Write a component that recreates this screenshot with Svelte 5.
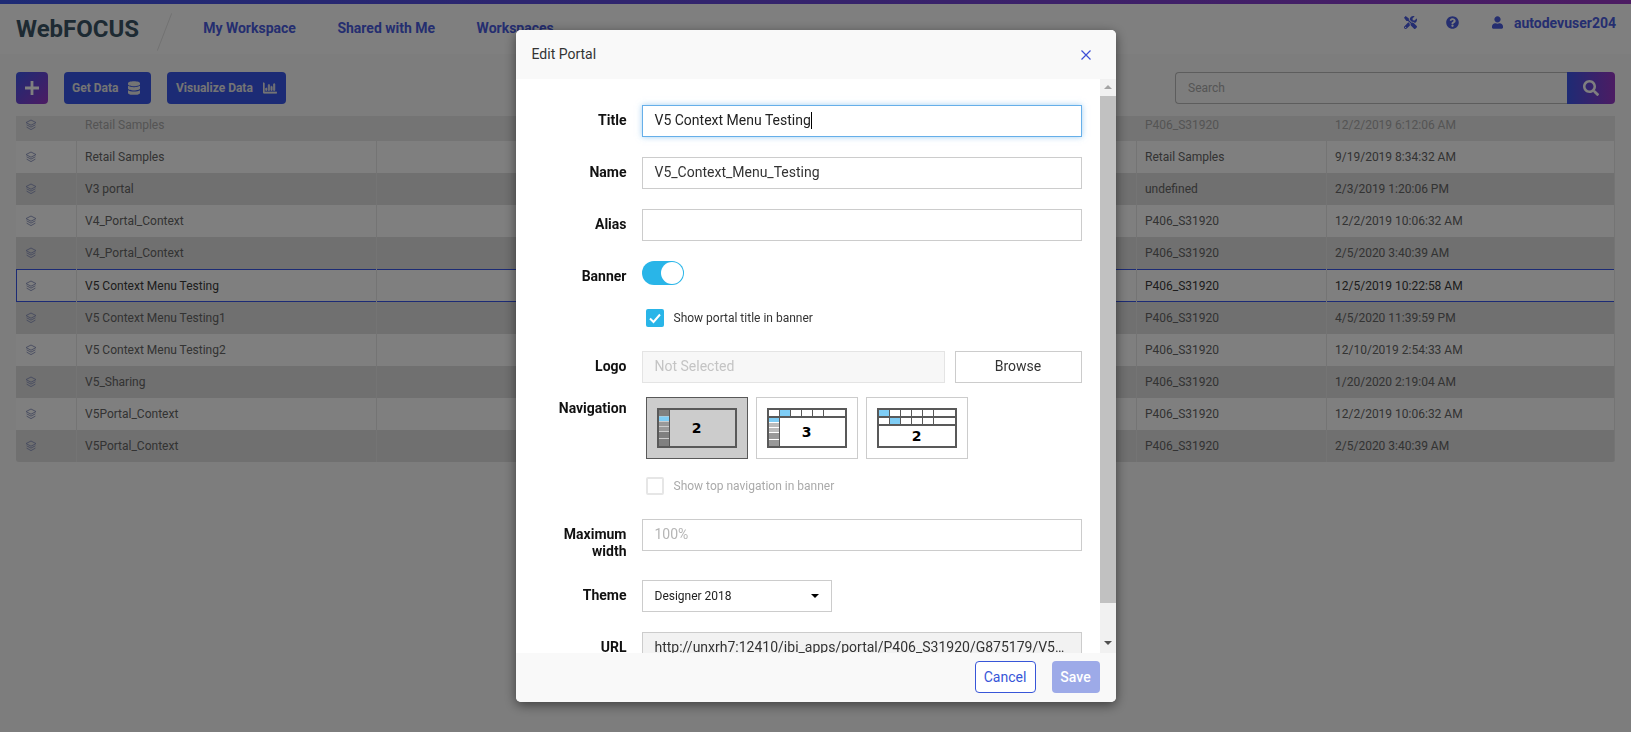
<script>
  const rows = [
    ['Retail Samples', 'P406_S31920', '12/2/2019 6:12:06 AM'],
    ['Retail Samples', 'Retail Samples', '9/19/2019 8:34:32 AM'],
    ['V3 portal', 'undefined', '2/3/2019 1:20:06 PM'],
    ['V4_Portal_Context', 'P406_S31920', '12/2/2019 10:06:32 AM'],
    ['V4_Portal_Context', 'P406_S31920', '2/5/2020 3:40:39 AM'],
    ['V5 Context Menu Testing', 'P406_S31920', '12/5/2019 10:22:58 AM'],
    ['V5 Context Menu Testing1', 'P406_S31920', '4/5/2020 11:39:59 PM'],
    ['V5 Context Menu Testing2', 'P406_S31920', '12/10/2019 2:54:33 AM'],
    ['V5_Sharing', 'P406_S31920', '1/20/2020 2:19:04 AM'],
    ['V5Portal_Context', 'P406_S31920', '12/2/2019 10:06:32 AM'],
    ['V5Portal_Context', 'P406_S31920', '2/5/2020 3:40:39 AM']
  ];
  const selected = 5;
</script>

<div class="page">
  <div class="topline"></div>
  <header class="header">
    <div class="logo">WebFOCUS</div>
    <div class="slash"></div>
    <nav class="nav">
      <span>My Workspace</span>
      <span>Shared with Me</span>
      <span>Workspaces</span>
    </nav>
    <div class="tools">
      <svg class="ico-tools" viewBox="0 0 512 512"><path d="M501.1 395.7L384 278.6c-23.1-23.1-57.6-27.6-85.4-13.9L192 158.1V96L64 0 0 64l96 128h62.1l106.6 106.6c-13.6 27.8-9.2 62.3 13.9 85.4l117.1 117.1c14.6 14.6 38.2 14.6 52.7 0l52.7-52.7c14.5-14.6 14.5-38.2 0-52.7zM331.7 225c28.3 0 54.9 11 74.9 31l19.4 19.4c15.8-6.9 30.8-16.5 43.8-29.5 37.1-37.1 49.7-89.3 37.9-136.7-2.2-9-13.5-12.1-20.1-5.5l-74.4 74.4-67.9-11.3L334 98.9l74.4-74.4c6.6-6.6 3.4-17.9-5.7-20.2-47.4-11.7-99.6.9-136.6 37.9-28.5 28.5-41.9 66.1-41.2 103.6l82.1 82.1c8.1-1.9 16.5-2.9 24.7-2.9zm-103.9 82l-56.7-56.7L18.7 402.8c-25 25-25 65.5 0 90.5s65.5 25 90.5 0l123.6-123.6c-7.6-19.9-9.9-41.6-5-62.7zM64 472c-13.2 0-24-10.8-24-24 0-13.3 10.7-24 24-24s24 10.7 24 24c0 13.2-10.7 24-24 24z"/></svg>
      <svg class="ico-help" viewBox="0 0 512 512"><path d="M504 256c0 136.997-111.043 248-248 248S8 392.997 8 256C8 119.083 119.043 8 256 8s248 111.083 248 248zM262.655 90c-54.497 0-89.255 22.957-116.549 63.758-3.536 5.286-2.353 12.415 2.715 16.258l34.699 26.31c5.205 3.947 12.621 3.008 16.665-2.122 17.864-22.658 30.113-35.797 57.303-35.797 20.429 0 45.698 13.148 45.698 32.958 0 14.976-12.363 22.667-32.534 33.976C247.128 238.528 216 254.941 216 296v4c0 6.627 5.373 12 12 12h56c6.627 0 12-5.373 12-12v-1.333c0-28.462 83.186-29.647 83.186-106.667 0-58.002-60.165-102-116.531-102zM256 338c-25.365 0-46 20.635-46 46 0 25.364 20.635 46 46 46s46-20.636 46-46c0-25.365-20.635-46-46-46z"/></svg>
      <svg class="ico-user" viewBox="0 0 448 512"><path d="M224 256c70.7 0 128-57.3 128-128S294.7 0 224 0 96 57.3 96 128s57.3 128 128 128zm89.6 32h-16.7c-22.2 10.2-46.9 16-72.9 16s-50.6-5.8-72.9-16h-16.7C60.2 288 0 348.2 0 422.4V464c0 26.5 21.5 48 48 48h352c26.5 0 48-21.5 48-48v-41.6c0-74.2-60.2-134.4-134.4-134.4z"/></svg>
      <span class="username">autodevuser204</span>
    </div>
  </header>

  <div class="actions">
    <button class="btn-plus">
      <svg viewBox="0 0 14 14" width="14" height="14"><path d="M5.6 0h2.8v5.6H14v2.8H8.4V14H5.6V8.4H0V5.6h5.6z"/></svg>
    </button>
    <button class="btn-action get">Get Data
      <svg viewBox="0 0 448 512" width="12" height="14"><path d="M448 73.143v45.714C448 159.143 347.667 192 224 192S0 159.143 0 118.857V73.143C0 32.857 100.333 0 224 0s224 32.857 224 73.143zM448 176v102.857C448 319.143 347.667 352 224 352S0 319.143 0 278.857V176c48.125 33.143 136.208 48.572 224 48.572S399.874 209.143 448 176zm0 160v102.857C448 479.143 347.667 512 224 512S0 479.143 0 438.857V336c48.125 33.143 136.208 48.572 224 48.572S399.874 369.143 448 336z"/></svg>
    </button>
    <button class="btn-action viz">Visualize Data
      <svg class="ico-chart" viewBox="0 0 512 512" width="14" height="14"><path d="M396.8 352h22.4c6.4 0 12.8-6.4 12.8-12.8V108.8c0-6.4-6.4-12.8-12.8-12.8h-22.4c-6.4 0-12.8 6.4-12.8 12.8v230.4c0 6.4 6.4 12.8 12.8 12.8zm-192 0h22.4c6.4 0 12.8-6.4 12.8-12.8V140.8c0-6.4-6.4-12.8-12.8-12.8h-22.4c-6.4 0-12.8 6.4-12.8 12.8v198.4c0 6.4 6.4 12.8 12.8 12.8zm96 0h22.4c6.4 0 12.8-6.4 12.8-12.8V204.8c0-6.4-6.4-12.8-12.8-12.8h-22.4c-6.4 0-12.8 6.4-12.8 12.8v134.4c0 6.4 6.4 12.8 12.8 12.8zM496 400H48V80c0-8.84-7.16-16-16-16H16C7.16 64 0 71.16 0 80v336c0 17.67 14.33 32 32 32h464c8.84 0 16-7.16 16-16v-16c0-8.84-7.16-16-16-16zm-387.2-48h22.4c6.4 0 12.8-6.4 12.8-12.8v-70.4c0-6.4-6.4-12.8-12.8-12.8h-22.4c-6.4 0-12.8 6.4-12.8 12.8v70.4c0 6.4 6.4 12.8 12.8 12.8z"/></svg>
    </button>
    <div class="search">
      <div class="search-input">Search</div>
      <button class="search-btn">
        <svg viewBox="0 0 512 512" width="16" height="16"><path d="M505 442.7L405.3 343c-4.5-4.5-10.6-7-17-7H372c27.6-35.3 44-79.7 44-128C416 93.1 322.9 0 208 0S0 93.1 0 208s93.1 208 208 208c48.3 0 92.7-16.4 128-44v16.3c0 6.4 2.5 12.5 7 17l99.7 99.7c9.4 9.4 24.6 9.4 33.9 0l28.3-28.3c9.4-9.4 9.4-24.6.1-34zM208 336c-70.7 0-128-57.2-128-128 0-70.7 57.2-128 128-128 70.7 0 128 57.2 128 128 0 70.7-57.2 128-128 128z"/></svg>
      </button>
    </div>
  </div>

  <div class="table">
    <div class="table-inner">
      {#each rows as row, i}
        <div class="row" class:odd={i % 2 === 0} class:sel={i === selected} class:faded={i === 0}>
          <div class="cell icon">
            <svg viewBox="0 0 12 12" width="12" height="12" fill="none" stroke="currentColor" stroke-width="0.9"><path d="M6 1l5 2.6-5 2.6-5-2.6z"/><path d="M1.6 5.8L6 8.1l4.4-2.3"/><path d="M1.6 8.1L6 10.6l4.4-2.5"/></svg>
          </div>
          <div class="cell">{row[0]}</div>
          <div class="cell"></div>
          <div class="cell">{row[1]}</div>
          <div class="cell">{row[2]}</div>
        </div>
      {/each}
    </div>
  </div>
</div>

<div class="overlay">
  <div class="modal">
    <div class="modal-head">
      <span class="modal-title">Edit Portal</span>
      <svg viewBox="0 0 10 10" width="10" height="10" fill="none" stroke="#3d4fd6" stroke-width="1.2"><path d="M0.5 0.5l9 9M9.5 0.5l-9 9"/></svg>
    </div>

    <div class="modal-body">
      <div class="form">
        <div class="field">
          <div class="label">Title</div>
          <div class="input focus">V5 Context Menu Testing<span class="caret"></span></div>
        </div>
        <div class="field">
          <div class="label">Name</div>
          <div class="input">V5_Context_Menu_Testing</div>
        </div>
        <div class="field">
          <div class="label">Alias</div>
          <div class="input"></div>
        </div>
        <div class="field banner">
          <div class="label">Banner</div>
          <div class="toggle"><span class="knob"></span></div>
        </div>
        <div class="check-row">
          <span class="check on">
            <svg viewBox="0 0 18 18" width="18" height="18" fill="none" stroke="#fff" stroke-width="2"><path d="M4 9.5l3.5 3.5L14 5.5"/></svg>
          </span>
          <span>Show portal title in banner</span>
        </div>
        <div class="field logo-row">
          <div class="label">Logo</div>
          <div class="input disabled">Not Selected</div>
          <div class="browse">Browse</div>
        </div>
        <div class="field nav-row">
          <div class="label">Navigation</div>
          <div class="tiles">
            <div class="tile active">
              <svg viewBox="0 0 80 40" width="80" height="40">
                <rect x="1" y="1" width="78" height="38" fill="#ccc" stroke="#595959" stroke-width="2"/>
                <rect x="2" y="2" width="10" height="6" fill="#808080"/>
                <rect x="2" y="8.5" width="10" height="4.5" fill="#7fcdf5"/>
                <rect x="2" y="14" width="10" height="4" fill="#999"/>
                <rect x="2" y="19" width="10" height="4" fill="#999"/>
                <rect x="2" y="24" width="10" height="6" fill="#808080"/>
                <rect x="2" y="31" width="10" height="7" fill="#808080"/>
                <path d="M12.5 2v36" stroke="#595959" stroke-width="1"/>
                <text x="39.7" y="25.4" class="num">2</text>
              </svg>
            </div>
            <div class="tile">
              <svg viewBox="0 0 80 40" width="80" height="40">
                <rect x="1" y="1" width="78" height="38" fill="#fff" stroke="#595959" stroke-width="2"/>
                <rect x="12.5" y="2" width="11" height="6.5" fill="#7fcdf5"/>
                <path d="M2 9h76" stroke="#595959" stroke-width="2"/>
                <path d="M12.5 2v6.5M23.5 2v6.5M34.5 2v6.5M45.5 2v6.5M56.5 2v6.5" stroke="#595959" stroke-width="1"/>
                <rect x="2" y="10" width="10" height="4" fill="#7fcdf5"/>
                <rect x="2" y="15" width="10" height="4" fill="#bbb"/>
                <rect x="2" y="20" width="10" height="4" fill="#bbb"/>
                <rect x="2" y="25" width="10" height="6" fill="#999"/>
                <rect x="2" y="32" width="10" height="6" fill="#999"/>
                <path d="M12.5 10v28" stroke="#595959" stroke-width="1"/>
                <text x="39.7" y="29.4" class="num">3</text>
              </svg>
            </div>
            <div class="tile">
              <svg viewBox="0 0 80 40" width="80" height="40">
                <rect x="1" y="1" width="78" height="38" fill="#fff" stroke="#595959" stroke-width="2"/>
                <rect x="2" y="2" width="10.5" height="6.5" fill="#7fcdf5"/>
                <rect x="12.5" y="10" width="11" height="6" fill="#7fcdf5"/>
                <path d="M2 9h76M2 17h76" stroke="#595959" stroke-width="2"/>
                <path d="M12.5 2v14M23.5 2v14M34.5 2v14M45.5 2v14M56.5 2v14" stroke="#595959" stroke-width="1"/>
                <text x="39.7" y="32.8" class="num">2</text>
              </svg>
            </div>
          </div>
        </div>
        <div class="check-row off">
          <span class="check"></span>
          <span>Show top navigation in banner</span>
        </div>
        <div class="field max-row">
          <div class="label">Maximum<br />width</div>
          <div class="input placeholder">100%</div>
        </div>
        <div class="field theme-row">
          <div class="label">Theme</div>
          <div class="input select">
            <span>Designer 2018</span>
            <span class="arrow"></span>
          </div>
        </div>
        <div class="field url-row">
          <div class="label">URL</div>
          <div class="input readonly"><span class="ellipsis">http://unxrh7:12410/ibi_apps/portal/P406_S31920/G875179/V5_Context_Menu_Testing</span></div>
        </div>
      </div>
      <div class="scrollbar">
        <span class="sb-up"></span>
        <div class="sb-thumb"></div>
        <span class="sb-down"></span>
      </div>
    </div>

    <div class="modal-foot">
      <button class="cancel">Cancel</button>
      <button class="save">Save</button>
    </div>
  </div>
</div>

<style>
  :global(body) {
    margin: 0;
    background: #fafafa;
    font-family: Roboto, "Liberation Sans", sans-serif;
    overflow: hidden;
  }

  .page {
    height: 732px;
    overflow: hidden;
  }

  .topline {
    height: 4px;
    background: linear-gradient(90deg, #3c56ea, #9a38c6);
  }

  .header {
    height: 50px;
    background: #fff;
    display: flex;
    align-items: flex-start;
    padding: 0 15px 0 16px;
    box-sizing: border-box;
  }

  .logo {
    font-size: 24px;
    font-weight: 700;
    color: #3b5566;
    line-height: 50px;
  }

  .slash {
    width: 1px;
    height: 40px;
    margin: 8px 0 0 25px;
    background: #e4e4e4;
    transform: rotate(21deg);
  }

  .nav {
    display: flex;
    gap: 41.5px;
    margin-left: 38px;
    font-size: 14px;
    font-weight: 700;
    color: #4a5ce0;
    line-height: 48px;
  }

  .tools {
    margin-left: auto;
    display: flex;
    align-items: center;
    height: 37px;
    color: #4a5ce0;
    fill: #4a5ce0;
  }

  .ico-tools { width: 13px; height: 13px; margin-right: 29px; }
  .ico-help { width: 13px; height: 13px; margin-right: 33px; }
  .ico-user { width: 11px; height: 13px; margin-right: 11px; }

  .username {
    font-size: 14px;
    font-weight: 700;
  }

  .actions {
    display: flex;
    align-items: center;
    padding: 17px 16px 0;
    height: 34px;
  }

  button {
    font-family: inherit;
    border: 0;
    padding: 0;
  }

  .btn-plus {
    width: 32px;
    height: 32px;
    border-radius: 4px;
    background: linear-gradient(135deg, #3c56ea, #9a38c6);
    display: flex;
    align-items: center;
    justify-content: center;
    fill: #fff;
    margin-right: 16px;
  }

  .btn-action {
    height: 32px;
    border-radius: 4px;
    background: #3856ea;
    color: #e8e8e8;
    fill: #e8e8e8;
    font-size: 12px;
    font-weight: 700;
    display: flex;
    align-items: center;
    gap: 10px;
    padding: 0 8px;
    box-sizing: border-box;
  }

  .get { width: 87px; margin-right: 16px; }
  .viz { width: 119px; padding-left: 9px; }

  .ico-chart {
    stroke: #e8e8e8;
    stroke-width: 24;
  }

  .search {
    margin-left: auto;
    display: flex;
    width: 440px;
    height: 32px;
  }

  .search-input {
    flex: 1;
    border: 1px solid #bbb;
    border-right: 0;
    border-radius: 4px 0 0 4px;
    background: #fafafa;
    color: #aaa;
    font-size: 12px;
    line-height: 30px;
    padding-left: 12px;
  }

  .search-btn {
    width: 48px;
    border-radius: 0 4px 4px 0;
    background: linear-gradient(90deg, #3c56ea, #9a38c6);
    fill: #fff;
    display: flex;
    align-items: center;
    justify-content: center;
  }

  .table {
    margin: 11px 16px 0;
    height: 346px;
    overflow: hidden;
    border-radius: 0 0 3px 3px;
  }

  .table-inner {
    margin-top: -7px;
  }

  .row {
    display: grid;
    grid-template-columns: 61px 300px 760px 190px 1fr;
    height: 32.1px;
    box-sizing: border-box;
    background: #fff;
    color: #666;
    font-size: 12px;
  }

  .row.odd {
    background: #e0e0e0;
  }

  .row.faded {
    color: #aaa;
    background: #e8e8e8;
  }

  .row.sel {
    background: #fff;
    color: #3a3a3a;
    box-shadow: inset 0 0 0 1px #3856ea;
  }

  .cell {
    display: flex;
    align-items: center;
    padding-left: 8px;
    border-right: 1px solid #e8e8e8;
  }

  .cell.icon {
    color: #8a93bd;
    padding-left: 9px;
  }

  .overlay {
    position: fixed;
    inset: 0;
    background: rgba(0, 0, 0, 0.5);
    display: flex;
    align-items: center;
    justify-content: center;
  }

  .modal {
    width: 600px;
    height: 672px;
    background: #fff;
    border-radius: 5px;
    overflow: hidden;
    box-shadow: 0 3px 12px rgba(0, 0, 0, 0.5);
    display: flex;
    flex-direction: column;
    color: #333;
  }

  .modal-head {
    height: 49px;
    flex: none;
    background: #f9f9f9;
    display: flex;
    align-items: center;
    justify-content: space-between;
    padding: 0 25px 0 16px;
    font-size: 14px;
  }

  .modal-title {
    margin-top: -2px;
  }

  .modal-body {
    flex: 1;
    min-height: 0;
    display: flex;
  }

  .form {
    flex: 1;
    overflow: hidden;
    padding-top: 26px;
  }

  .field {
    display: flex;
    align-items: flex-start;
    margin-bottom: 20px;
  }

  .label {
    width: 111px;
    flex: none;
    text-align: right;
    font-size: 14px;
    font-weight: 700;
    color: #111;
    line-height: 17px;
    padding-top: 7px;
    margin-right: 15px;
  }

  .input {
    width: 440px;
    height: 32px;
    box-sizing: border-box;
    border: 1px solid #ccc;
    font-size: 14px;
    line-height: 29px;
    padding: 0 12px;
    color: #333;
    background: #fff;
    white-space: nowrap;
  }

  .input.focus {
    border-color: #66afe9;
    box-shadow: 0 0 6px rgba(102, 175, 233, 0.6);
    color: #222;
  }

  .caret {
    display: inline-block;
    width: 1px;
    height: 17px;
    background: #000;
    vertical-align: -4px;
  }

  .banner {
    margin-bottom: 24px;
  }

  .toggle {
    width: 42px;
    height: 24px;
    border-radius: 12px;
    background: #29b5e8;
    box-sizing: border-box;
    display: flex;
    justify-content: flex-end;
  }

  .knob {
    width: 22px;
    height: 22px;
    margin: 1px;
    border-radius: 50%;
    background: #fff;
  }

  .check-row {
    display: flex;
    align-items: center;
    margin: 0 0 24px 130px;
    font-size: 12px;
    color: #333;
    gap: 10px;
    height: 18px;
  }

  .check {
    width: 18px;
    height: 18px;
    border-radius: 2px;
    box-sizing: border-box;
    border: 2px solid #e6e6e6;
    background: #fff;
    position: relative;
  }

  .check.on {
    background: #29b5e8;
    border: 0;
    display: block;
  }

  .check svg { display: block; }

  .check-row.off {
    color: #aaa;
    margin-bottom: 24px;
    margin-top: 18px;
  }

  .logo-row {
    margin-bottom: 14px;
  }

  .input.disabled {
    width: 303px;
    background: #f7f7f7;
    border-color: #e4e4e4;
    color: #c4c4c4;
  }

  .browse {
    width: 127px;
    height: 32px;
    margin-left: 10px;
    box-sizing: border-box;
    border: 1px solid #ccc;
    font-size: 14px;
    line-height: 29px;
    text-align: center;
  }

  .nav-row {
    margin-bottom: 0;
  }

  .nav-row .label {
    padding-top: 3px;
  }

  .tiles {
    display: flex;
    gap: 8px;
    margin-left: 4px;
  }

  .tile {
    width: 102px;
    height: 62px;
    box-sizing: border-box;
    border: 1px solid #ccc;
    padding: 10px;
    background: #fff;
  }

  .tile svg { display: block; }

  .tile.active {
    background: #ccc;
    border-color: #595959;
  }

  .num {
    font-family: "DejaVu Sans", sans-serif;
    font-weight: 700;
    font-size: 14px;
    text-anchor: middle;
    fill: #000;
  }

  .max-row {
    margin-bottom: 20px;
  }

  .input.placeholder {
    color: #b5b5b5;
  }

  .input.select {
    width: 190px;
    font-size: 12px;
    display: flex;
    align-items: center;
    justify-content: space-between;
    color: #222;
  }

  .arrow {
    width: 0;
    height: 0;
    border: 4px solid transparent;
    border-top: 4px solid #000;
    border-bottom: 0;
    margin-right: 0;
  }

  .input.readonly {
    background: #f2f2f2;
    color: #333;
    padding-right: 12px;
  }

  .ellipsis {
    display: block;
    overflow: hidden;
    text-overflow: ellipsis;
  }

  .scrollbar {
    width: 16px;
    flex: none;
    background: #f1f1f1;
    position: relative;
    display: flex;
    flex-direction: column;
    align-items: center;
  }

  .sb-thumb {
    width: 100%;
    height: 507px;
    margin-top: 1px;
    background: #c1c1c1;
  }

  .sb-up, .sb-down {
    width: 0;
    height: 0;
    border: 4px solid transparent;
  }

  .sb-up {
    border-bottom: 4px solid #a3a3a3;
    border-top: 0;
    margin-top: 6px;
    margin-bottom: 6px;
  }

  .sb-down {
    border-top: 4px solid #505050;
    border-bottom: 0;
    margin-top: 38px;
  }

  .modal-foot {
    height: 49px;
    flex: none;
    background: #f9f9f9;
    display: flex;
    align-items: center;
    justify-content: flex-end;
    gap: 16px;
    padding: 0 16px 2px;
    box-sizing: border-box;
  }

  .cancel, .save {
    height: 32px;
    border-radius: 4px;
    font-size: 14px;
  }

  .cancel {
    width: 61px;
    background: #fff;
    border: 1px solid #3856d8;
    color: #3856d8;
    line-height: 28px;
  }

  .save {
    width: 48px;
    background: #9daae8;
    color: #fff;
    font-weight: 500;
  }
</style>
